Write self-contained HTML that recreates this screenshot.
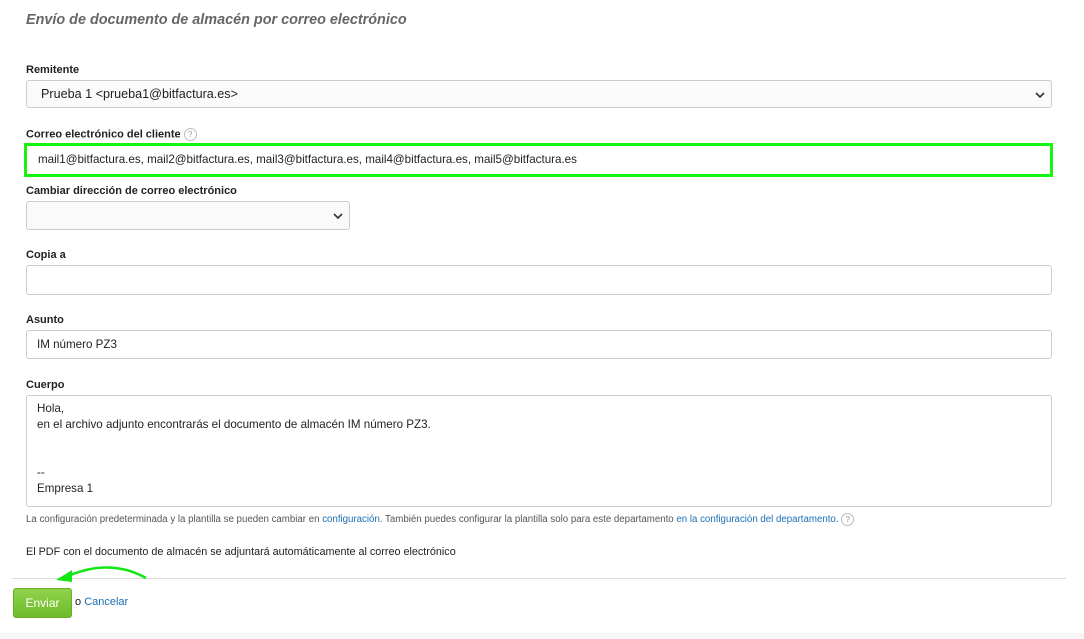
<!DOCTYPE html>
<html><head><meta charset="utf-8"><style>
body{margin:0;width:1084px;height:639px;background:#fff;font-family:"Liberation Sans",Arial,sans-serif;position:relative;overflow:hidden}
.a{position:absolute}
.t{left:26px;top:12px;font-size:14.4px;font-weight:bold;font-style:italic;color:#666}
.l{left:26px;font-size:11px;font-weight:bold;color:#222}
.box{left:26px;border:1px solid #ccc;border-radius:3px;background:#fff;font-size:11.6px;color:#222;box-sizing:border-box}
.txt{padding-left:10px;line-height:27px}
a{color:#1a6fb5;text-decoration:none}
.q{display:inline-block;width:11px;height:11px;border:1px solid #bbb;border-radius:50%;font-size:8px;color:#999;text-align:center;line-height:11px;font-weight:normal;vertical-align:middle}
</style></head><body>
<div class="a t">Envío de documento de almacén por correo electrónico</div>
<div class="a l" style="top:64px">Remitente</div>
<div class="a box" style="top:80px;width:1026px;height:28px;background:#fafafa"><div class="txt" style="padding-left:14px;font-size:12.6px">Prueba 1 &lt;prueba1@bitfactura.es&gt;</div>
<svg class="a" style="right:6px;top:10px" width="10" height="8"><path d="M1 2l4 4 4-4" stroke="#333" stroke-width="1.6" fill="none"/></svg></div>
<div class="a l" style="top:128px">Correo electrónico del cliente <span class="q">?</span></div>
<div class="a" style="left:24px;top:143px;width:1029px;height:34px;border:3px solid #12f512;box-sizing:border-box"><div style="padding-left:11px;line-height:28px;font-size:11.6px;color:#222">mail1@bitfactura.es, mail2@bitfactura.es, mail3@bitfactura.es, mail4@bitfactura.es, mail5@bitfactura.es</div></div>
<div class="a l" style="top:185px">Cambiar dirección de correo electrónico</div>
<div class="a box" style="top:201px;width:324px;height:29px;background:#fafafa"><svg class="a" style="right:6px;top:10px" width="10" height="8"><path d="M1 2l4 4 4-4" stroke="#333" stroke-width="1.6" fill="none"/></svg></div>
<div class="a l" style="top:249px">Copia a</div>
<div class="a box" style="top:265px;width:1026px;height:30px"></div>
<div class="a l" style="top:314px">Asunto</div>
<div class="a box" style="top:330px;width:1026px;height:29px"><div class="txt">IM número PZ3</div></div>
<div class="a l" style="top:379px">Cuerpo</div>
<div class="a box" style="top:395px;width:1026px;height:112px;padding:5px 10px;line-height:16px">Hola,<br>en el archivo adjunto encontrarás el documento de almacén IM número PZ3.<br><br><br>--<br>Empresa 1</div>
<div class="a" style="left:26px;top:513px;font-size:9.7px;color:#555">La configuración predeterminada y la plantilla se pueden cambiar en <a>configuración</a>. También puedes configurar la plantilla solo para este departamento <a>en la configuración del departamento</a>. <span class="q">?</span></div>
<div class="a" style="left:26px;top:546px;font-size:10.8px;color:#222">El PDF con el documento de almacén se adjuntará automáticamente al correo electrónico</div>
<div class="a" style="left:12px;top:578px;width:1054px;height:1px;background:#ddd"></div>
<svg class="a" style="left:50px;top:560px" width="100" height="25"><path d="M96 18 Q60 -2 18 16" stroke="#14e814" stroke-width="2.5" fill="none"/><path d="M6 20 L22 10 L22 22 Z" fill="#14e814"/></svg>
<div class="a" style="left:13px;top:588px;width:59px;height:30px;border-radius:3px;background:linear-gradient(#8fd34a,#6fbb2a);border:1px solid #6aae2c;box-sizing:border-box;color:#fff;font-size:12px;text-align:center;line-height:29px">Enviar</div>
<div class="a" style="left:75px;top:596px;font-size:11px;color:#222">o <a>Cancelar</a></div>
<div class="a" style="left:0;top:633px;width:1084px;height:6px;background:#f7f7f7"></div>
</body></html>
